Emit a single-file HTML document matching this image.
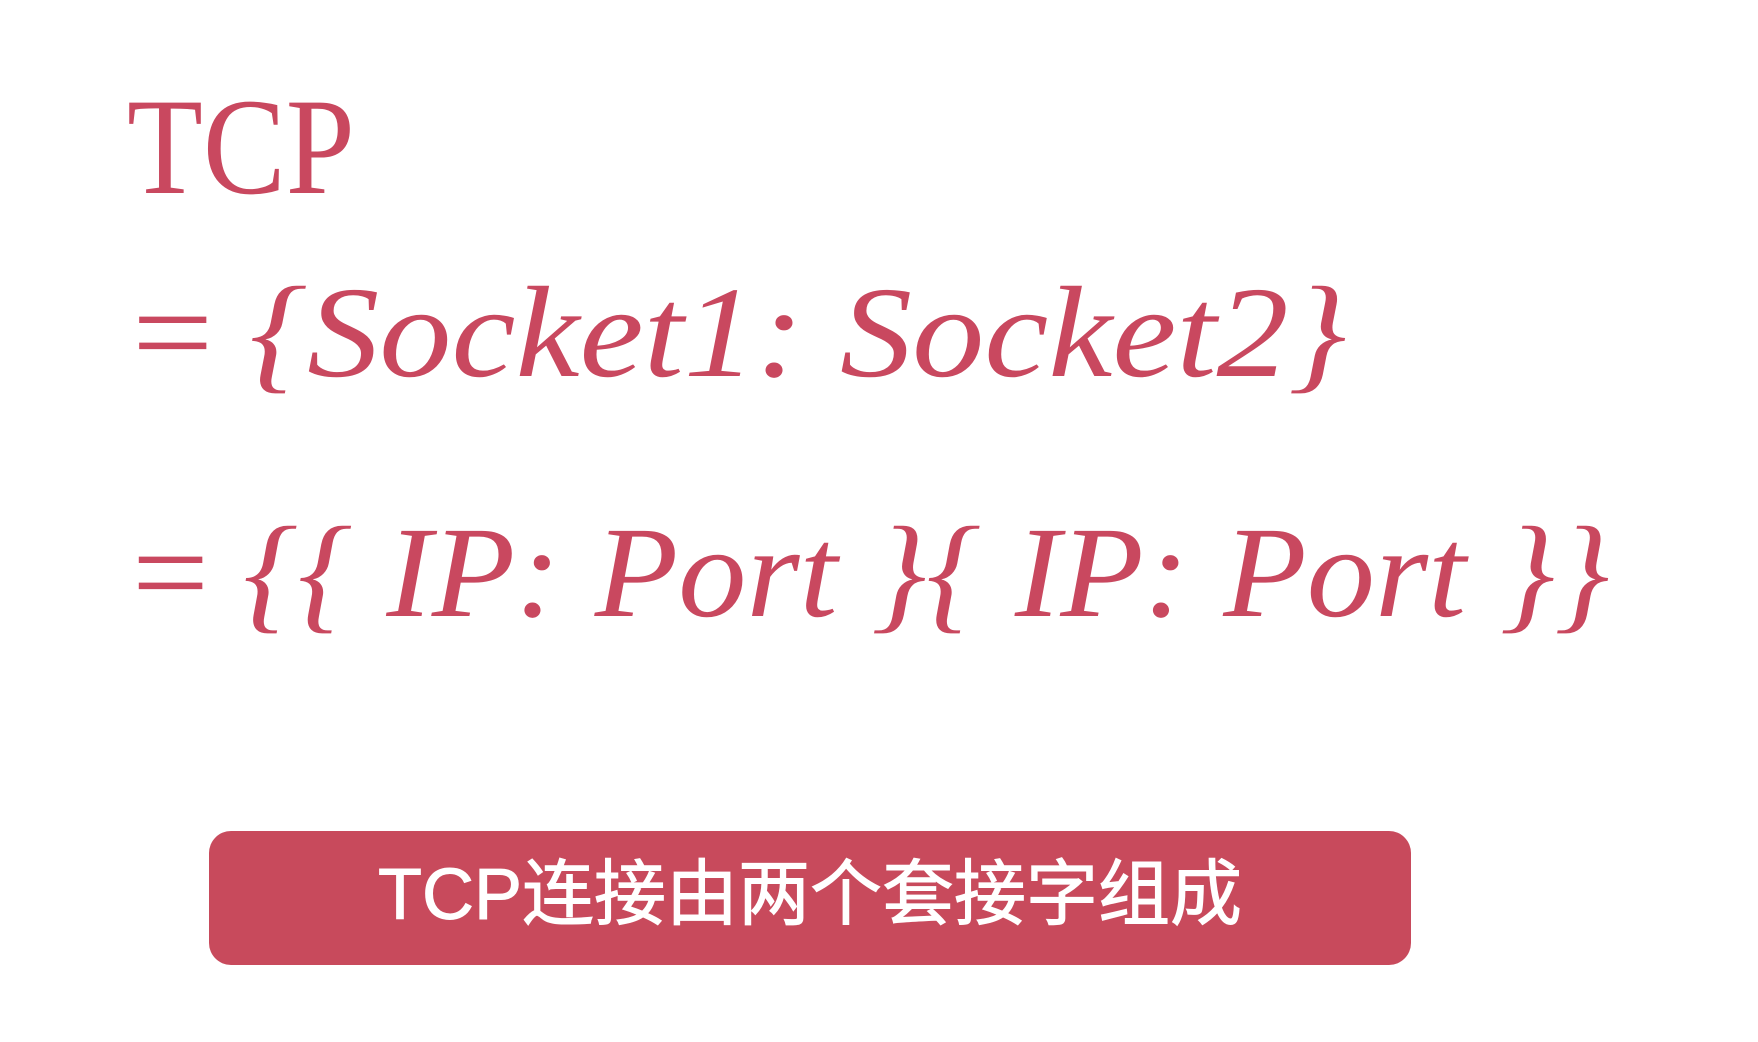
<!DOCTYPE html>
<html><head><meta charset="utf-8"><style>
html,body{margin:0;padding:0;background:#fff;width:1758px;height:1042px;overflow:hidden}
.t{position:absolute;color:#c9485f;white-space:nowrap;line-height:1;transform-origin:0 0}
.s{font-family:"Liberation Serif",serif}
.i{font-family:"Liberation Serif",serif;font-style:italic}
#box{position:absolute;left:209px;top:831px;width:1202px;height:134px;border-radius:22px;background:#c84a5c}
#box span{position:absolute;left:0;right:0;top:28px;text-align:center;color:#fff;font:72px "Liberation Sans","Noto Sans CJK SC",sans-serif;line-height:1;-webkit-text-stroke:1px #fff}
</style></head><body>
<div class="t s" style="left:127px;top:78px;font-size:138px;transform:scaleX(0.9)">TCP</div>
<div class="t s" style="left:132px;top:268px;font-size:130px;transform:scaleX(1.11)"><span style="font-style:normal">=</span> <span class="i">{Socket1: Socket2}</span></div>
<div class="t s" style="left:132px;top:508px;font-size:130px;transform:scaleX(1.05)"><span style="font-style:normal">=</span> <span class="i">{{ IP: Port }{ IP: Port }}</span></div>
<div id="box"><span>TCP连接由两个套接字组成</span></div>
</body></html>
